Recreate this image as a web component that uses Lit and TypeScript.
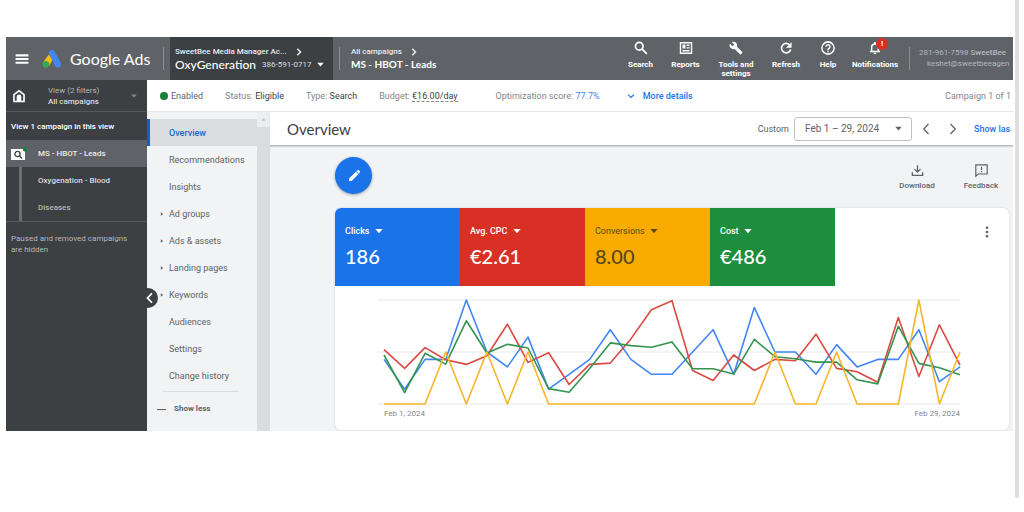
import { LitElement, html, svg, css, nothing, type TemplateResult } from "lit";
import { customElement, property } from "lit/decorators.js";
import { classMap } from "lit/directives/class-map.js";

const icons: Record<string, TemplateResult> = {
  menu: svg`<path d="M1 4h22v3.500H1zM1 10.300h22v3.500H1zM1 16.500h22V20H1z"/>`,
  search: svg`<path fill="none" stroke="currentColor" stroke-width="3" d="M9 2.500a6.500 6.500 0 1 1 0 13 6.500 6.500 0 0 1 0-13zM14 14l8 8"/>`,
  reports: svg`<path fill="none" stroke="currentColor" stroke-width="2.400" d="M2.500 3h19v18h-19z"/><path d="M6 6h5v7H6zM13 6h5v2.500h-5zM13 10.500h5V13h-5zM6 15.500h12V18H6z"/>`,
  tools: svg`<path d="M22.700 19l-9.100-9.100c.9-2.300.4-5-1.500-6.900-2-2-5-2.400-7.400-1.300L9 6 6 9 1.600 4.700C.4 7.100.9 10.100 2.900 12.100c1.900 1.900 4.600 2.400 6.900 1.500l9.100 9.100c.4.4 1 .4 1.400 0l2.300-2.300c.5-.4.5-1.100.1-1.400z"/>`,
  refresh: svg`<path fill="none" stroke="currentColor" stroke-width="3" d="M18.500 7.200A8 8 0 1 0 20 14.500"/><path d="M21.500 2v9.500H12z"/>`,
  help: svg`<circle cx="12" cy="12" r="10.500" fill="none" stroke="currentColor" stroke-width="2.600"/><path fill="none" stroke="currentColor" stroke-width="2.400" d="M8.600 9.800a3.400 3.400 0 1 1 5.500 2.600c-1.300 1-2.100 1.500-2.100 3"/><path d="M10.800 16.800h2.400v2.400h-2.400z"/>`,
  bell: svg`<path fill="none" stroke="currentColor" stroke-width="2.600" d="M3.500 18h17M6.300 18v-7a5.700 5.700 0 0 1 11.400 0v7"/><path d="M10.300 2h3.400v3.500h-3.400zM9.500 20h5a2.500 2.500 0 0 1-5 0z"/>`,
  home: svg`<path fill="none" stroke="currentColor" stroke-width="2.800" d="M3.400 9.800L12 3l8.600 6.800V21.500H3.400z"/><path d="M8 21v-7.500a4 4 0 0 1 8 0V21z"/>`,
  right: svg`<path fill="none" stroke="currentColor" stroke-width="4.400" d="M7 2l9.500 10L7 22"/>`,
  left: svg`<path fill="none" stroke="currentColor" stroke-width="3.600" d="M16 2.500L7 12l9 9.500"/>`,
  thinRight: svg`<path fill="none" stroke="currentColor" stroke-width="2.600" d="M7 2l9.500 10L7 22"/>`,
  thinLeft: svg`<path fill="none" stroke="currentColor" stroke-width="2.600" d="M17 2L7.500 12l9.500 10"/>`,
  down: svg`<path fill="none" stroke="currentColor" stroke-width="3.600" d="M3 8l9 8.500L21 8"/>`,
  caret: svg`<path d="M1 6h22L12 19z"/>`,
  caretRight: svg`<path d="M5 1v22l14-11z"/>`,
  caretUp: svg`<path d="M1 18h22L12 6z"/>`,
  edit: svg`<path d="M3.500 16.200L15.200 4.500l4.300 4.300L7.800 20.500H3.500zM16 3.700l1.200-1.200a2.600 2.600 0 0 1 3.700 0l.6.600a2.600 2.600 0 0 1 0 3.700L20.300 8z"/>`,
  download: svg`<path fill="none" stroke="currentColor" stroke-width="2.400" d="M12 2.500v12M6.500 9.500l5.500 5.500 5.500-5.500M2.500 15v6h19v-6"/>`,
  feedback: svg`<path fill="none" stroke="currentColor" stroke-width="2.200" d="M1.500 1.500h21v17H6l-4.500 4z"/><path d="M10.900 5h2.200v6h-2.200zM10.900 13h2.200v2.200h-2.200z"/>`,
  kebab: svg`<circle cx="12" cy="3.500" r="2.600"/><circle cx="12" cy="12" r="2.600"/><circle cx="12" cy="20.500" r="2.600"/>`,
  minus: svg`<path d="M0 10.700h24v2.800H0z"/>`,
};

@customElement("ads-icon")
class AdsIcon extends LitElement {
  static styles = css`
    :host { display: inline-flex; flex: none; width: 12px; height: 12px; }
    .glyph { width: 100%; height: 100%; fill: currentColor; overflow: visible; }
  `;
  @property() name = "";
  render() {
    return html`<svg class="glyph" viewBox="0 0 24 24" aria-hidden="true">${icons[this.name] ?? nothing}</svg>`;
  }
}

interface Series { color: string; max: number; values: number[]; }

const series: Series[] = [
  { color: "#4285f4", max: 14, values: [6, 2, 6, 6, 14, 7, 5, 9, 2, 4, 6, 10, 6, 4, 4, 7, 10, 4, 13, 7, 7, 4, 8, 5, 6, 6, 10, 3, 5] },
  { color: "#db4a42", max: 310, values: [162, 106, 168, 132, 118, 144, 238, 124, 153, 58, 118, 122, 194, 281, 308, 100, 70, 146, 100, 133, 129, 208, 106, 96, 65, 258, 82, 236, 116] },
  { color: "#34954f", max: 310, values: [146, 34, 151, 119, 248, 152, 178, 167, 46, 35, 106, 182, 174, 169, 185, 105, 105, 89, 193, 141, 135, 125, 125, 72, 60, 232, 121, 108, 87] },
  { color: "#f9b529", max: 2, values: [0, 0, 0, 1, 0, 1, 0, 1, 0, 0, 0, 0, 0, 0, 0, 0, 0, 0, 0, 1, 0, 0, 1, 0, 0, 0, 2, 0, 1] },
];

@customElement("trend-chart")
class TrendChart extends LitElement {
  static styles = css`
    :host { display: block; }
    .plot { display: block; width: 100%; height: 104px; overflow: visible; }
    .grid { stroke: #e6e8ea; stroke-width: 1; vector-effect: non-scaling-stroke; }
    .line { fill: none; stroke-width: 1.6; stroke-linejoin: round; vector-effect: non-scaling-stroke; }
    .axis { display: flex; justify-content: space-between; padding: 4px 0 0 7px; font-size: 8px; line-height: 12px; color: #80868b; }
  `;
  private points(s: Series) {
    return s.values
      .map((v, i) => `${(7 + (576 * i) / (s.values.length - 1)).toFixed(1)},${(104 - (104 * v) / s.max).toFixed(1)}`)
      .join(" ");
  }
  render() {
    return html`
      <svg class="plot" viewBox="0 0 583 104" preserveAspectRatio="none" role="img" aria-label="Clicks, average CPC, conversions and cost by day">
        ${[0, 52, 104].map((y) => svg`<line class="grid" x1="0" x2="583" y1=${y} y2=${y} />`)}
        ${series.map((s) => svg`<polyline class="line" stroke=${s.color} points=${this.points(s)} />`)}
      </svg>
      <div class="axis"><span>Feb 1, 2024</span><span>Feb 29, 2024</span></div>
    `;
  }
}

@customElement("metric-tile")
class MetricTile extends LitElement {
  static styles = css`
    :host { display: block; box-sizing: border-box; padding: 16px 10px 0; color: #fff; }
    :host([tone="blue"]) { background: #1a73e8; }
    :host([tone="red"]) { background: #d93025; }
    :host([tone="amber"]) { background: #f9ab00; color: #5a4818; }
    :host([tone="green"]) { background: #1e8e3e; }
    .pick { display: inline-grid; align-items: center; }
    .choice {
      grid-area: 1 / 1; appearance: none; margin: 0; padding: 0 13px 0 0; border: 0; background: none;
      font: 500 9px/14px Roboto, sans-serif; color: inherit;
    }
    :host([tone="amber"]) .choice { font-weight: 400; }
    .arrow { grid-area: 1 / 1; justify-self: end; width: 8px; height: 8px; pointer-events: none; }
    .value { margin: 4px 0 0; font: 500 20px/28px "Google Sans", Lato, sans-serif; }
  `;
  @property() label = "";
  @property() value = "";
  render() {
    return html`
      <div class="pick">
        <select class="choice" aria-label="Metric"><option>${this.label}</option></select>
        <ads-icon class="arrow" name="caret"></ads-icon>
      </div>
      <p class="value">${this.value}</p>
    `;
  }
}

@customElement("app-root")
class AppRoot extends LitElement {
  static styles = css`
    :host { display: block; background: #fff; font: 9px/12px Roboto, sans-serif; color: #5f6368; }
    button { margin: 0; padding: 0; border: 0; background: none; font: inherit; color: inherit; text-align: inherit; }
    a { color: inherit; text-decoration: none; }
    .page { margin-right: 5px; border-right: 4px solid #e0e0e0; padding: 37px 2px 67px 6px; }
    .frame { overflow: hidden; }

    .top { display: flex; align-items: stretch; height: 43px; background: #5f6368; color: #fff; overflow: hidden; }
    .brand { display: flex; align-items: center; padding-left: 9px; width: 150px; box-sizing: border-box; flex: none; }
    .burger { display: flex; }
    .burger ads-icon { width: 14px; height: 14px; }
    .logo { width: 20px; height: 20px; margin: 0 8px 0 13px; }
    .product { font: 16px/24px "Google Sans", Lato, sans-serif; white-space: nowrap; }
    .rule { flex: none; align-self: center; width: 1px; height: 23px; background: #8a8d91; }
    .account { display: flex; flex-direction: column; justify-content: center; flex: none; box-sizing: border-box; width: 163px; margin: 0 6px; padding-left: 5px; background: #3c4043; }
    .crumb { display: flex; align-items: center; gap: 8px; font-size: 8px; font-weight: 500; line-height: 12px; color: #e8eaed; white-space: nowrap; }
    .crumb ads-icon { width: 8px; height: 8px; }
    .who { display: flex; align-items: center; gap: 6px; font: 500 12px/14px "Google Sans", Lato, sans-serif; white-space: nowrap; }
    .who small { font: 8px/14px Roboto, sans-serif; color: #dadce0; }
    .who ads-icon { width: 7px; height: 7px; }
    .where { display: flex; flex-direction: column; justify-content: center; padding-left: 11px; flex: 1; white-space: nowrap; }
    .place { font: bold 10px/13px "Google Sans", Lato, sans-serif; }
    .tools { display: flex; padding-top: 4px; }
    .tool { position: relative; display: flex; flex-direction: column; align-items: center; justify-content: flex-start; box-sizing: border-box; width: 45px; font-size: 8px; font-weight: 700; line-height: 9px; text-align: center; }
    .tool ads-icon { width: 14px; height: 14px; margin-bottom: 5px; }
    .tool.wide { width: 56px; padding: 0 6px; }
    .tool.last { width: 54px; }
    .tool.mid { width: 44px; }
    .tool.slim { width: 40px; }
    .badge { position: absolute; top: -3px; left: 28px; width: 12px; height: 12px; border-radius: 50%; background: #d93025; font-size: 8px; line-height: 12px; }
    .top .end { margin-left: 7px; }
    .user { flex: none; width: 103px; box-sizing: border-box; padding: 10px 0 0 9px; overflow: hidden; white-space: nowrap; font-size: 8px; line-height: 11px; color: #b4b7ba; }
    .user b { font-weight: 500; }
    .mail { display: block; padding-left: 8px; }

    .body { display: grid; grid-template-columns: 141px minmax(0, 1fr); min-height: 351px; }
    .side { background: #3c4043; color: #dadce0; font-size: 8px; font-weight: 500; position: relative; }
    .filter { display: flex; align-items: center; height: 32px; padding: 0 10px 0 6px; border-bottom: 1px solid #54585b; box-sizing: border-box; }
    .filter > ads-icon { width: 14px; height: 14px; color: #fff; }
    .views { flex: 1; padding-left: 22px; line-height: 11px; }
    .views span { display: block; color: #b4b7ba; font-weight: 400; }
    .filter .tiny { width: 6px; height: 6px; color: #80868b; }
    .note { margin: 0; padding: 9px 5px 7px; color: #fff; line-height: 12px; }
    .camp { display: flex; align-items: center; height: 27px; background: #5f6368; color: #e8eaed; }
    .camp-icon { width: 16px; height: 14px; margin: 0 11px 0 5px; }
    .kids { margin-left: 13px; border-left: 3px solid #6b6f73; }
    .kid { display: block; padding: 0 0 0 16px; line-height: 27px; }
    .kid.dim { color: #b4b7ba; }
    .paused { margin: 0; padding: 11px 10px 11px 5px; border-top: 1px solid #54585b; line-height: 11px; color: #b4b7ba; font-weight: 400; }
    .collapse { position: absolute; right: -11px; top: 208px; z-index: 1; width: 20px; height: 20px; border-radius: 50%; background: #3c4043; color: #fff; display: flex; align-items: center; justify-content: flex-end; padding-right: 2px; }

    .work { display: grid; grid-template-columns: 123px minmax(0, 1fr); grid-template-rows: 32px 1fr; }
    .status { grid-column: 1 / -1; display: flex; align-items: center; gap: 22px; padding: 0 2px 0 13px; box-sizing: border-box; border-bottom: 1px solid #e4e6e8; white-space: nowrap; color: #80868b; }
    .status b { font-weight: 400; color: #3c4043; }
    .status .on { display: flex; align-items: center; gap: 3px; color: #5f6368; }
    .dot { width: 8px; height: 8px; border-radius: 50%; background: #188038; }
    .status .dashed { border-bottom: 1px dashed #80868b; }
    .score { margin-left: 16px; }
    .status .score b { color: #4285f4; }
    .more { display: flex; align-items: center; gap: 8px; margin-left: 5px; color: #1a73e8; font-weight: 500; }
    .more ads-icon { width: 8px; height: 8px; }
    .count { margin-left: auto; }

    .nav { display: grid; grid-template-columns: minmax(0, 1fr) 13px; background: #f1f3f4; }
    .items { padding-top: 7px; }
    .item { display: flex; align-items: center; height: 27px; padding-left: 22px; }
    .item.parent { padding-left: 13px; gap: 5px; }
    .item ads-icon { width: 4px; height: 4px; }
    .item.current { box-sizing: border-box; border-left: 3px solid #1a5dc0; padding-left: 19px; background: #dadce0; color: #1967d2; font-weight: 500; }
    .show-less { margin: 2px 18px 0 16px; border-top: 1px solid #dadce0; }
    .less { display: flex; align-items: center; gap: 8px; margin-left: -6px; padding-top: 11px; font-size: 8px; font-weight: 700; }
    .less ads-icon { width: 9px; height: 9px; }
    .track { background: #dadce0; }
    .up { display: flex; align-items: center; justify-content: center; height: 15px; background: #eceef0; color: #bdc1c6; }
    .up ads-icon { width: 5px; height: 5px; }

    .main { background: #f1f3f4; }
    .head { display: flex; align-items: center; height: 34px; padding-left: 17px; background: #fff; border-bottom: 1px solid #b8babc; box-shadow: 0 1px 1px #d0d2d4; box-sizing: border-box; white-space: nowrap; }
    .title { flex: 1; margin: 0; font: 15px/20px "Google Sans", Lato, sans-serif; color: #3c4043; }
    .range { display: inline-grid; align-items: center; width: 118px; margin: 0 8px 0 5px; }
    .range select { grid-area: 1 / 1; appearance: none; width: 100%; height: 24px; margin: 0; padding: 0 10px; border: 1px solid #bdc1c6; border-radius: 3px; background: #fff; font: 10px/12px Roboto, sans-serif; color: #5f6368; }
    .range ads-icon { grid-area: 1 / 1; justify-self: end; margin-right: 10px; width: 7px; height: 7px; pointer-events: none; }
    .step { display: flex; }
    .steps { display: flex; gap: 15px; }
    .show { width: 39px; margin-left: 15px; overflow: hidden; color: #1a73e8; font-weight: 500; }
    .content { padding: 11px 4px 1px 65px; }
    .actions { display: flex; align-items: flex-start; height: 51px; }
    .fab { display: flex; align-items: center; justify-content: center; width: 37px; height: 37px; margin-right: auto; border-radius: 50%; background: #1a73e8; color: #fff; box-shadow: 0 1px 3px #9aa0a6; }
    .fab ads-icon { width: 14px; height: 14px; }
    .act { display: flex; flex-direction: column; align-items: center; gap: 3px; width: 64px; padding-top: 7px; font-size: 8px; font-weight: 500; }
    .act + .act { margin-right: -4px; }
    .act ads-icon { width: 13px; height: 13px; }
    .card { background: #fff; border-radius: 6px; box-shadow: 0 0 2px #c4c7ca; overflow: hidden; padding-bottom: 10px; }
    .metrics { display: grid; grid-template-columns: repeat(4, 125px) 1fr; height: 78px; }
    .kebab { justify-self: end; align-self: start; display: flex; margin: 18px 16px 0 0; }
    .chart { margin: 14px 49px 0 42px; }
  `;

  private tool(icon: string, label: string, size = "", badge = "") {
    return html`<button class="tool ${size}">
      <ads-icon name=${icon}></ads-icon>${label}${badge ? html`<span class="badge">${badge}</span>` : nothing}
    </button>`;
  }

  private nav(label: string, kind = "") {
    return html`<a href="#" class=${classMap({ item: true, current: kind === "current", parent: kind === "parent" })}>
      ${kind === "parent" ? html`<ads-icon name="caretRight"></ads-icon>` : nothing}${label}
    </a>`;
  }

  render() {
    return html`
      <div class="page"><div class="frame">
        <header class="top">
          <div class="brand">
            <button class="burger" aria-label="Main menu"><ads-icon name="menu"></ads-icon></button>
            <svg class="logo" viewBox="0 0 24 24" aria-hidden="true">
              <path d="M8.200 6.500L12.800 13 8 21 1.500 15.500z" fill="#fbbc04"/>
              <path d="M12 5l7 13.500" stroke="#4285f4" stroke-width="7.600" stroke-linecap="round"/>
              <circle cx="4.600" cy="18.500" r="4" fill="#34a853"/>
            </svg>
            <span class="product">Google Ads</span>
          </div>
          <span class="rule end"></span>
          <button class="account">
            <span class="crumb">SweetBee Media Manager Ac... <ads-icon name="right"></ads-icon></span>
            <span class="who">OxyGeneration <small>386-591-0717</small><ads-icon name="caret"></ads-icon></span>
          </button>
          <span class="rule"></span>
          <div class="where">
            <a href="#" class="crumb">All campaigns <ads-icon name="right"></ads-icon></a>
            <span class="place">MS - HBOT - Leads</span>
          </div>
          <div class="tools">
            ${this.tool("search", "Search")}
            ${this.tool("reports", "Reports")}
            ${this.tool("tools", "Tools and settings", "wide")}
            ${this.tool("refresh", "Refresh", "mid")}
            ${this.tool("help", "Help", "slim")}
            ${this.tool("bell", "Notifications", "last", "!")}
          </div>
          <span class="rule end"></span>
          <div class="user"><span>281-961-7598 <b>SweetBee</b></span><span class="mail">keshet@sweetbeeagen</span></div>
        </header>
        <div class="body">
          <aside class="side">
            <div class="filter">
              <ads-icon name="home"></ads-icon>
              <button class="views"><span>View (2 filters)</span>All campaigns</button>
              <ads-icon class="tiny" name="caret"></ads-icon>
            </div>
            <p class="note">View 1 campaign in this view</p>
            <a href="#" class="camp">
              <svg class="camp-icon" viewBox="0 0 16 14" aria-hidden="true">
                <path d="M0 2h14v11H0z" fill="#fff"/>
                <circle cx="6.500" cy="7" r="2.600" fill="none" stroke="#3c4043" stroke-width="1.300"/>
                <path d="M8.500 9l2.500 2.500" stroke="#3c4043" stroke-width="1.300"/>
                <circle cx="14.500" cy="2" r="2.600" fill="#188038"/>
              </svg>MS - HBOT - Leads
            </a>
            <div class="kids">
              <a href="#" class="kid">Oxygenation - Blood</a>
              <a href="#" class="kid dim">Diseases</a>
            </div>
            <p class="paused">Paused and removed campaigns are hidden</p>
            <button class="collapse" aria-label="Collapse panel"><ads-icon name="left"></ads-icon></button>
          </aside>
          <div class="work">
            <div class="status">
              <span class="on"><i class="dot"></i>Enabled</span>
              <span>Status: <b>Eligible</b></span>
              <span>Type: <b>Search</b></span>
              <span>Budget: <b class="dashed">€16.00/day</b></span>
              <span class="score">Optimization score: <b>77.7%</b></span>
              <button class="more"><ads-icon name="down"></ads-icon>More details</button>
              <span class="count">Campaign 1 of 1</span>
            </div>
            <nav class="nav">
              <div class="items">
                ${this.nav("Overview", "current")} ${this.nav("Recommendations")} ${this.nav("Insights")}
                ${this.nav("Ad groups", "parent")} ${this.nav("Ads & assets", "parent")}
                ${this.nav("Landing pages", "parent")} ${this.nav("Keywords", "parent")}
                ${this.nav("Audiences")} ${this.nav("Settings")} ${this.nav("Change history")}
                <div class="show-less">
                  <button class="less"><ads-icon name="minus"></ads-icon>Show less</button>
                </div>
              </div>
              <div class="track"><div class="up"><ads-icon name="caretUp"></ads-icon></div></div>
            </nav>
            <main class="main">
              <div class="head">
                <h1 class="title">Overview</h1>
                <label for="range">Custom</label>
                <span class="range">
                  <select id="range"><option>Feb 1 – 29, 2024</option></select>
                  <ads-icon name="caret"></ads-icon>
                </span>
                <span class="steps">
                  <button class="step" aria-label="Previous period"><ads-icon name="thinLeft"></ads-icon></button>
                  <button class="step" aria-label="Next period"><ads-icon name="thinRight"></ads-icon></button>
                </span>
                <a href="#" class="show">Show las</a>
              </div>
              <div class="content">
                <div class="actions">
                  <button class="fab" aria-label="Edit"><ads-icon name="edit"></ads-icon></button>
                  <button class="act"><ads-icon name="download"></ads-icon>Download</button>
                  <button class="act"><ads-icon name="feedback"></ads-icon>Feedback</button>
                </div>
                <section class="card">
                  <div class="metrics">
                    <metric-tile tone="blue" label="Clicks" value="186"></metric-tile>
                    <metric-tile tone="red" label="Avg. CPC" value="€2.61"></metric-tile>
                    <metric-tile tone="amber" label="Conversions" value="8.00"></metric-tile>
                    <metric-tile tone="green" label="Cost" value="€486"></metric-tile>
                    <button class="kebab" aria-label="More options"><ads-icon name="kebab"></ads-icon></button>
                  </div>
                  <trend-chart class="chart"></trend-chart>
                </section>
              </div>
            </main>
          </div>
        </div>
      </div></div>
    `;
  }
}
